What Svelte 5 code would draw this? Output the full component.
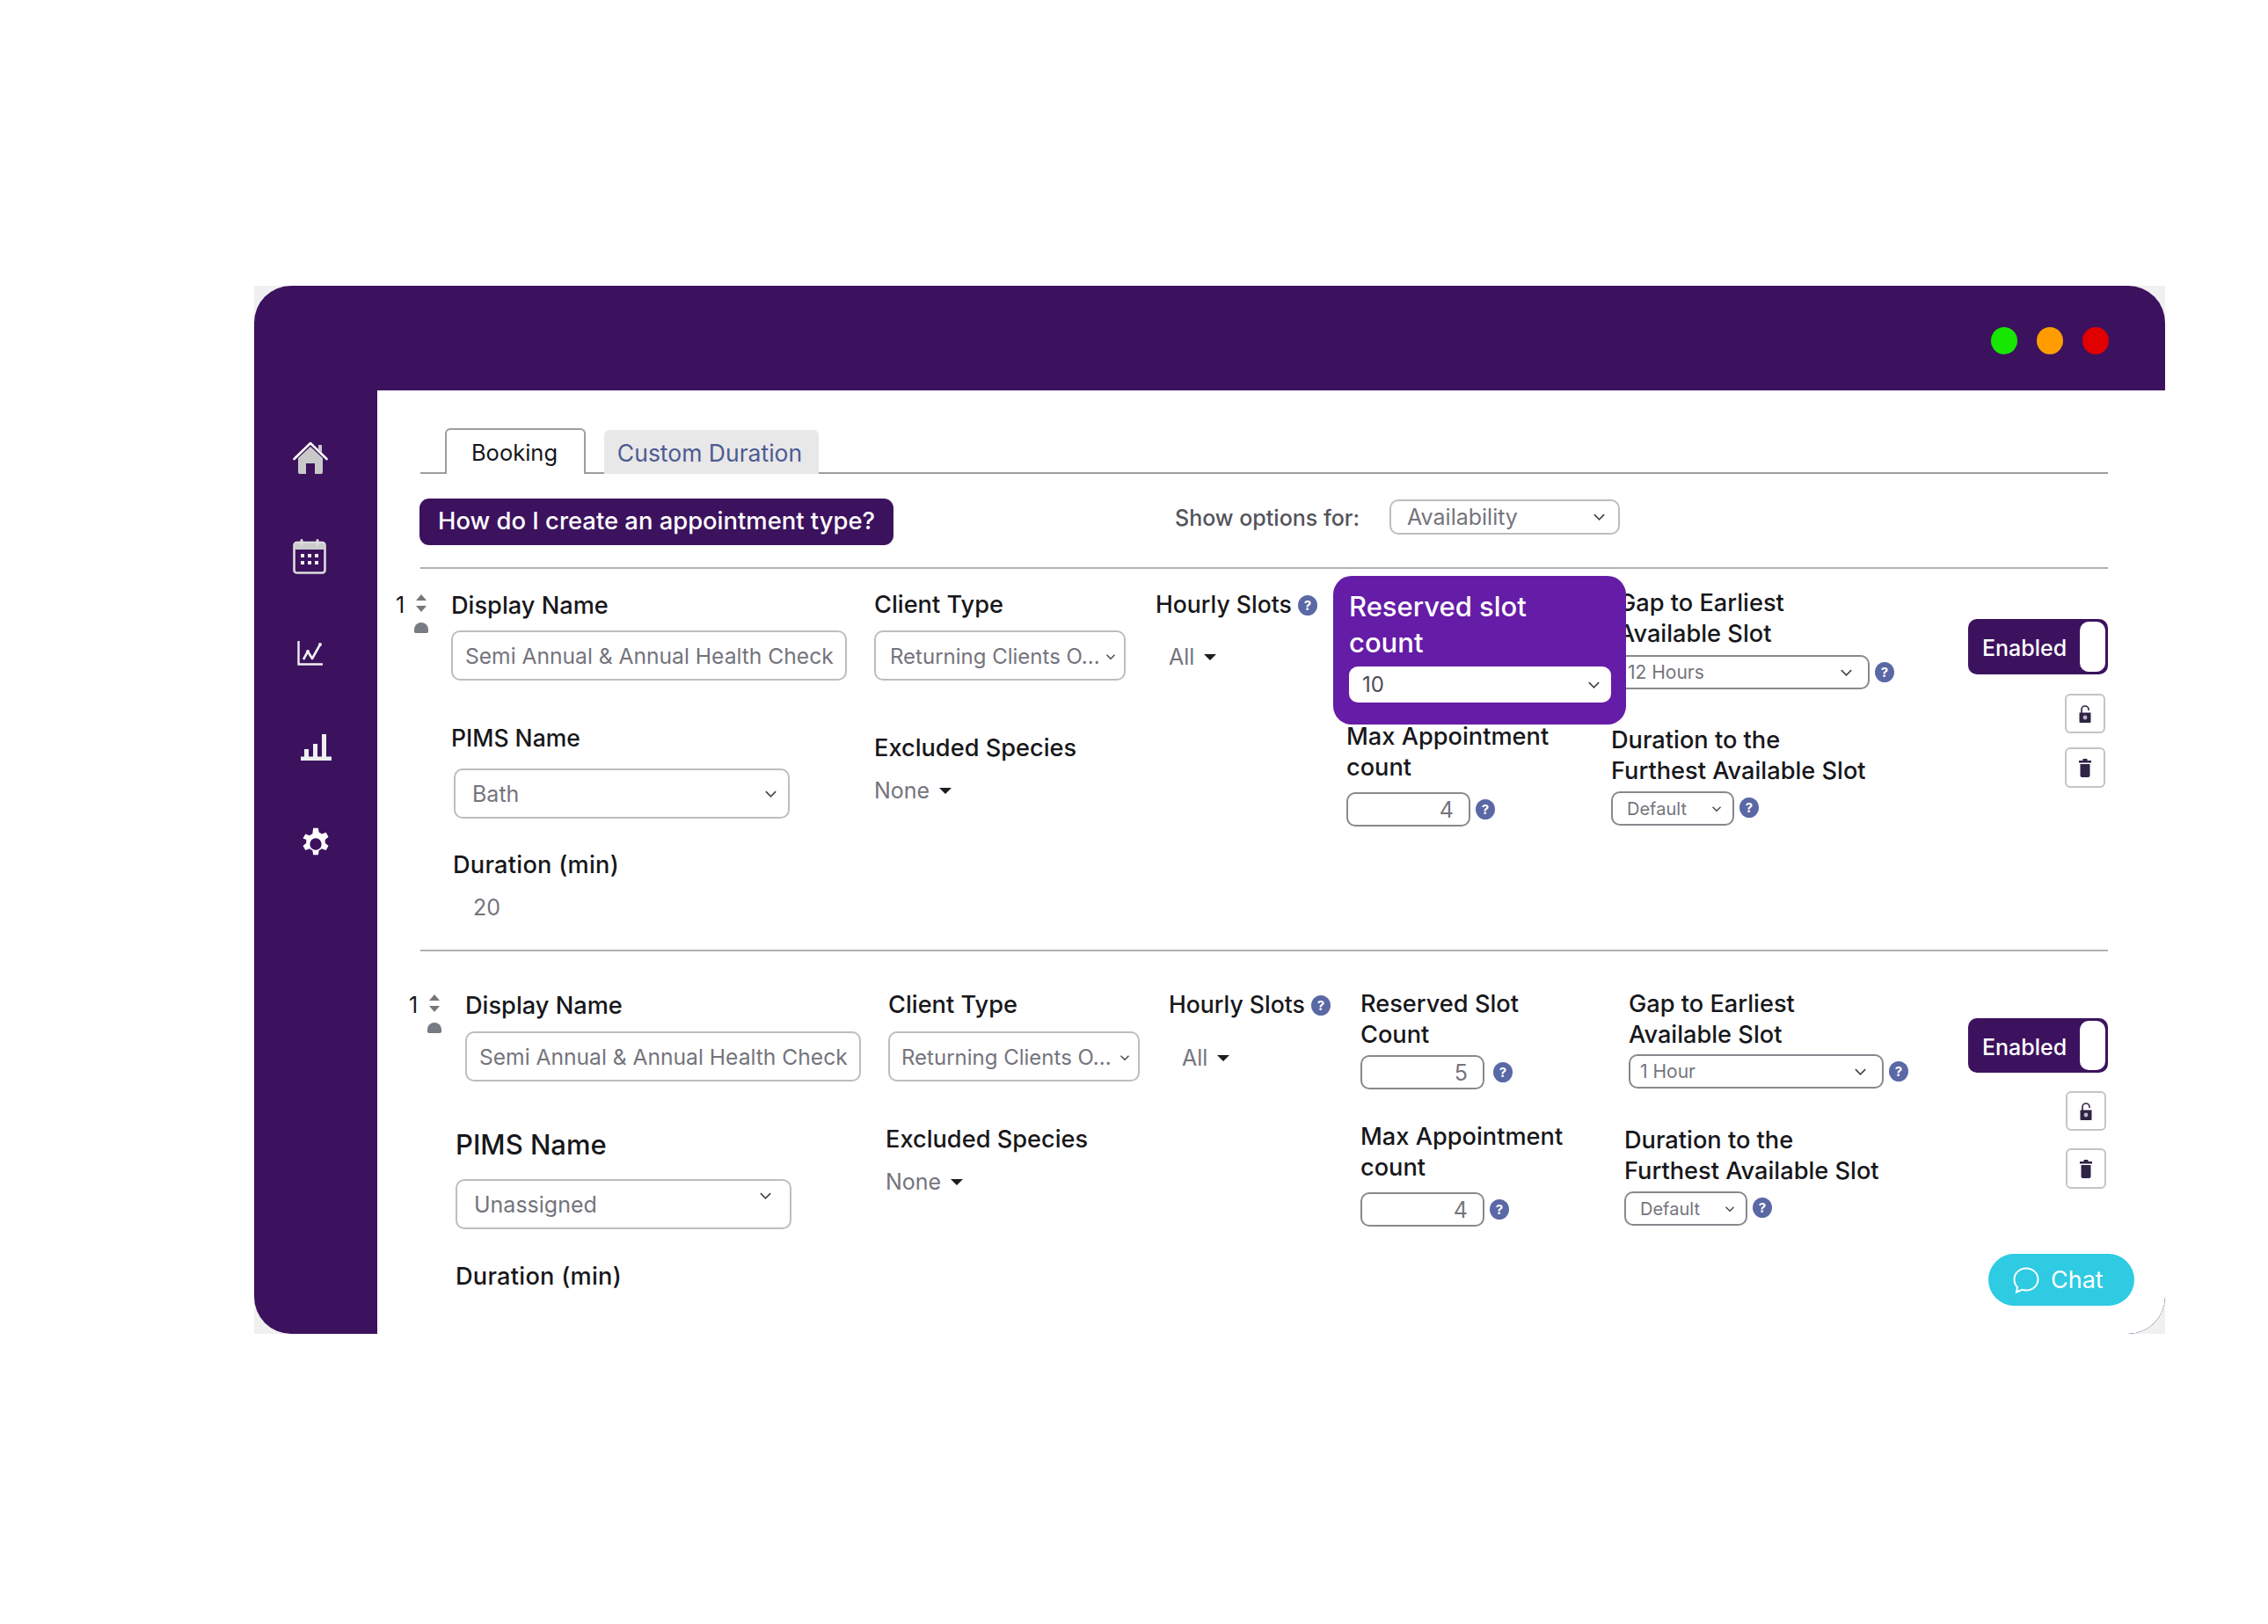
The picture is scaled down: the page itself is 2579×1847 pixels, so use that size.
<script lang="ts">
	const enabled = true;
</script>

{#snippet chevron()}
	<svg class="chevron" viewBox="0 0 16 10" aria-hidden="true"><path d="M2 2l6 6 6-6" /></svg>
{/snippet}

{#snippet help()}
	<span class="help">?</span>
{/snippet}

{#snippet caret()}
	<span class="caret"></span>
{/snippet}

{#snippet sorter()}
	<div class="sorter">
		<span class="up"></span>
		<span class="down"></span>
		<span class="blob"></span>
	</div>
{/snippet}

{#snippet actions()}
	<div class="toggle" class:on={enabled}>
		<span>Enabled</span>
		<i class="knob"></i>
	</div>
	<button class="icon-btn lock" aria-label="Lock">
		<svg viewBox="0 0 16 22" aria-hidden="true">
			<path class="shackle" d="M4 10V6a4 4 0 0 1 8 0v1" />
			<path d="M1.5 9.5h13v10.5a1 1 0 0 1-1 1h-11a1 1 0 0 1-1-1z" />
			<circle class="hole" cx="8" cy="15" r="2.4" />
		</svg>
	</button>
	<button class="icon-btn trash" aria-label="Delete">
		<svg viewBox="0 0 16 22" aria-hidden="true">
			<path d="M1 3h4.5V1h5v2H15v2.4H1zM2.5 7h11v13a2 2 0 0 1-2 2h-7a2 2 0 0 1-2-2z" />
		</svg>
	</button>
{/snippet}

<div class="page">
	<div class="frame">
		<div class="window">
			<header class="topbar">
				<span class="dot green"></span>
				<span class="dot orange"></span>
				<span class="dot red"></span>
			</header>

			<div class="body">
				<nav class="sidebar">
					<svg class="nav-home" viewBox="0 0 40 38" aria-label="Home">
						<path fill="#c9c9c9" d="M6 19L20 6l14 13v16a2 2 0 0 1-2 2h-7V25h-10v12H8a2 2 0 0 1-2-2z" />
						<path fill="none" stroke="#fff" stroke-width="2.6" stroke-linejoin="round" stroke-linecap="round" d="M1.5 20L20 2l18.500 18" />
						<path fill="#c9c9c9" d="M29 4h4v9l-4-4z" />
					</svg>
					<svg class="nav-cal" viewBox="0 0 38 40" aria-label="Calendar">
						<rect x="1.500" y="4" width="35" height="34.500" rx="3" fill="none" stroke="#ddd" stroke-width="2.600" />
						<path fill="#ccc" d="M2 5h34v7H2z" />
						<path stroke="#ddd" stroke-width="3" stroke-linecap="round" d="M10 1.500v5M28 1.500v5" />
						<g fill="#eee">
							<rect x="9" y="17" width="4" height="4" /><rect x="17" y="17" width="4" height="4" /><rect x="25" y="17" width="4" height="4" />
							<rect x="9" y="25" width="4" height="4" /><rect x="17" y="25" width="4" height="4" /><rect x="25" y="25" width="4" height="4" />
						</g>
					</svg>
					<svg class="nav-line" viewBox="0 0 29 28" aria-label="Trends">
						<path fill="none" stroke="#f0f0f0" stroke-width="2.400" d="M1.500 0v26.500H29" />
						<path fill="none" stroke="#f0f0f0" stroke-width="2.600" stroke-linejoin="round" d="M7 21l5-9 5 8 9-16" />
						<circle cx="26" cy="4" r="2" fill="#f0f0f0" />
						<circle cx="12" cy="12" r="2" fill="#f0f0f0" />
					</svg>
					<svg class="nav-bars" viewBox="0 0 35 30" aria-label="Reports">
						<path fill="#f0f0f0" d="M4 17h5v9H4zM14 11h5v15h-5zM24 0h5v26h-5zM0 25.500h35V30H0z" />
					</svg>
					<svg class="nav-gear" viewBox="0 0 24 24" aria-label="Settings">
						<path fill="#fff" fill-rule="evenodd" d="M13.700 1l.5 2.900a8.300 8.300 0 0 1 2 1.200l2.800-1 1.700 3-2.300 1.900a8.300 8.300 0 0 1 0 2.300l2.300 1.900-1.700 3-2.800-1a8.300 8.300 0 0 1-2 1.200l-.5 2.900h-3.400l-.5-2.900a8.300 8.300 0 0 1-2-1.200l-2.800 1-1.700-3 2.300-1.900a8.300 8.300 0 0 1 0-2.300L3.300 8.100l1.700-3 2.800 1a8.300 8.300 0 0 1 2-1.200L10.300 1zM12 8a4 4 0 1 0 0 8 4 4 0 0 0 0-8z" />
					</svg>
				</nav>

				<main class="content">
					<div class="tabs">
						<div class="tab active">Booking</div>
						<div class="tab">Custom Duration</div>
					</div>

					<div class="toolbar">
						<button class="help-btn">How do I create an appointment type?</button>
						<span class="show-label">Show options for:</span>
						<div class="select show-select"><span>Availability</span>{@render chevron()}</div>
					</div>

					<section class="record first">
						<div class="gutter"><span class="num">1</span>{@render sorter()}</div>

						<div class="col col-a">
							<div class="label">Display Name</div>
							<div class="field name"><span>Semi Annual &amp; Annual Health Check</span></div>
							<div class="label pims">PIMS Name</div>
							<div class="select big pims-select"><span>Bath</span>{@render chevron()}</div>
							<div class="label duration">Duration (min)</div>
							<div class="plain twenty">20</div>
						</div>

						<div class="col col-b">
							<div class="label">Client Type</div>
							<div class="select big client"><span>Returning Clients O...</span>{@render chevron()}</div>
							<div class="label excluded">Excluded Species</div>
							<div class="plain none">None {@render caret()}</div>
						</div>

						<div class="col col-c">
							<div class="label">Hourly Slots {@render help()}</div>
							<div class="plain all">All {@render caret()}</div>
						</div>

						<div class="col col-d">
							<div class="highlight">
								<div class="highlight-title">Reserved slot<br />count</div>
								<div class="select reserved"><span>10</span>{@render chevron()}</div>
							</div>
							<div class="label max">Max Appointment<br />count</div>
							<div class="with-help">
								<div class="number"><span>4</span></div>
								{@render help()}
							</div>
						</div>

						<div class="col col-e">
							<div class="label">Gap to Earliest<br />Available Slot</div>
							<div class="with-help gap-row">
								<div class="select small gap"><span>12 Hours</span>{@render chevron()}</div>
								{@render help()}
							</div>
							<div class="label further">Duration to the<br />Furthest Available Slot</div>
							<div class="with-help further-row">
								<div class="select small default"><span>Default</span>{@render chevron()}</div>
								{@render help()}
							</div>
						</div>

						<div class="col col-f">{@render actions()}</div>
					</section>

					<section class="record second">
						<div class="gutter"><span class="num">1</span>{@render sorter()}</div>

						<div class="col col-a">
							<div class="label">Display Name</div>
							<div class="field name"><span>Semi Annual &amp; Annual Health Check</span></div>
							<div class="label pims">PIMS Name</div>
							<div class="select big pims-select"><span>Unassigned</span>{@render chevron()}</div>
							<div class="label duration">Duration (min)</div>
						</div>

						<div class="col col-b">
							<div class="label">Client Type</div>
							<div class="select big client"><span>Returning Clients O...</span>{@render chevron()}</div>
							<div class="label excluded">Excluded Species</div>
							<div class="plain none">None {@render caret()}</div>
						</div>

						<div class="col col-c">
							<div class="label">Hourly Slots {@render help()}</div>
							<div class="plain all">All {@render caret()}</div>
						</div>

						<div class="col col-d">
							<div class="label">Reserved Slot<br />Count</div>
							<div class="with-help reserved-row">
								<div class="number"><span>5</span></div>
								{@render help()}
							</div>
							<div class="label max">Max Appointment<br />count</div>
							<div class="with-help">
								<div class="number"><span>4</span></div>
								{@render help()}
							</div>
						</div>

						<div class="col col-e">
							<div class="label">Gap to Earliest<br />Available Slot</div>
							<div class="with-help gap-row">
								<div class="select small gap"><span>1 Hour</span>{@render chevron()}</div>
								{@render help()}
							</div>
							<div class="label further">Duration to the<br />Furthest Available Slot</div>
							<div class="with-help further-row">
								<div class="select small default"><span>Default</span>{@render chevron()}</div>
								{@render help()}
							</div>
						</div>

						<div class="col col-f">{@render actions()}</div>
					</section>

					<button class="chat">
						<svg viewBox="0 0 32 32" aria-hidden="true">
							<path d="M16 2.500c7.500 0 13.500 5.500 13.500 12.500S23.500 27.500 16 27.500c-1.600 0-3.100-.2-4.500-.7L5 29.500l1-5.600C3.800 21.700 2.500 18.500 2.500 15 2.500 8 8.500 2.500 16 2.500z" />
						</svg>
						Chat
					</button>
				</main>
			</div>
		</div>
	</div>
</div>

<style>
	:global(body) {
		background: #fff;
		font-family: Inter, "Liberation Sans", sans-serif;
	}

	.page {
		width: 2579px;
		height: 1847px;
		padding: 325px 0 0 289px;
		box-sizing: border-box;
	}

	.frame {
		width: 2173px;
		height: 1192px;
		background: #f0f0f0;
	}

	.window {
		height: 100%;
		background: #3c125e;
		border-radius: 42px;
		overflow: hidden;
		display: flex;
		flex-direction: column;
	}

	.topbar {
		height: 119px;
		flex: none;
		display: flex;
		align-items: center;
		justify-content: flex-end;
		gap: 22px;
		padding: 5px 64px 0 0;
		box-sizing: border-box;
	}

	.dot {
		width: 30px;
		height: 31px;
		border-radius: 50%;
	}
	.green { background: #17e600; }
	.orange { background: #ff9d00; }
	.red { background: #e00000; }

	.body {
		flex: 1;
		display: flex;
		min-height: 0;
	}

	.sidebar {
		width: 140px;
		flex: none;
		display: flex;
		flex-direction: column;
		align-items: flex-start;
		padding-top: 58px;
		box-sizing: border-box;
	}
	.sidebar svg { display: block; }
	.nav-home { width: 40px; height: 38px; margin: 0 0 73px 44px; }
	.nav-cal { width: 38px; height: 40px; margin: 0 0 76px 44px; }
	.nav-line { width: 29px; height: 28px; margin: 0 0 78px 49px; }
	.nav-bars { width: 35px; height: 30px; margin: 0 0 75px 53px; }
	.nav-gear { width: 40px; height: 40px; margin-left: 50px; }

	.content {
		position: relative;
		flex: 1;
		min-width: 0;
		background: #fff;
		border-bottom-right-radius: 42px;
		padding: 43px 65px 0 49px;
		box-sizing: border-box;
		overflow: hidden;
	}

	.tabs {
		display: flex;
		gap: 21px;
		height: 52px;
		padding-left: 28px;
		border-bottom: 2px solid #9c9ca2;
		box-sizing: border-box;
	}

	.tab {
		width: 244px;
		height: 50px;
		margin-top: 2px;
		padding-right: 4px;
		box-sizing: border-box;
		background: #e8e8e8;
		border-radius: 6px 6px 0 0;
		color: #4d5b92;
		font-size: 26.500px;
		line-height: 52px;
		text-align: center;
	}

	.tab.active {
		width: 160px;
		height: 52px;
		margin-top: 0;
		padding-right: 2px;
		background: #fff;
		border: 2px solid #9c9ca2;
		border-bottom: none;
		color: #16161a;
		font-size: 25.500px;
		line-height: 52px;
	}

	.toolbar {
		display: flex;
		align-items: center;
		height: 53px;
		margin-top: 28px;
		padding-bottom: 25px;
		box-sizing: content-box;
		border-bottom: 2px solid #b0b0b6;
	}

	.help-btn {
		width: 539px;
		height: 53px;
		margin-left: -1px;
		padding: 0 0 3px;
		border: none;
		border-radius: 11px;
		background: #3c125e;
		color: #fff;
		font-family: inherit;
		font-size: 27.400px;
		font-weight: 500;
	}

	.show-label {
		margin: -9px 0 0 320px;
		color: #54545c;
		font-size: 25px;
		font-weight: 500;
	}

	.select, .field, .number {
		display: flex;
		align-items: center;
		box-sizing: border-box;
		background: #fff;
		border: 2px solid #bdbdc2;
		border-radius: 10px;
		color: #74747c;
		white-space: nowrap;
	}

	.select { justify-content: space-between; }

	.show-select {
		width: 262px;
		height: 40px;
		margin: -12px 0 0 34px;
		padding: 0 14px 0 18px;
		font-size: 25px;
	}

	.record {
		display: flex;
		height: 433px;
		border-bottom: 2px solid #b0b0b6;
		box-sizing: content-box;
	}

	.record.second {
		height: 440px;
		border-bottom: none;
	}

	.gutter {
		display: flex;
		gap: 11px;
		width: 63px;
		margin-left: -28px;
		flex: none;
		box-sizing: border-box;
		padding-top: 26px;
	}

	.second .gutter {
		width: 79px;
		padding: 46px 0 0 15px;
	}

	.num {
		font-size: 25px;
		line-height: 30px;
		color: #16161a;
	}

	.sorter {
		display: flex;
		flex-direction: column;
		align-items: center;
		gap: 6px;
		width: 16px;
		padding-top: 3px;
	}

	.up, .down {
		width: 0;
		height: 0;
		border-left: 6px solid transparent;
		border-right: 6px solid transparent;
	}
	.up { border-bottom: 7px solid #76767c; }
	.down { border-top: 7px solid #76767c; }

	.blob {
		width: 16px;
		height: 12px;
		margin-top: 6px;
		background: #777b84;
		border-radius: 9px 9px 2px 2px;
	}

	.col {
		display: flex;
		flex-direction: column;
		align-items: flex-start;
		flex: none;
		box-sizing: border-box;
	}

	.label {
		font-size: 27.200px;
		font-weight: 500;
		line-height: 35px;
		color: #17171b;
		white-space: nowrap;
	}

	.plain {
		color: #74747c;
		font-size: 25px;
		line-height: 35px;
	}

	.big {
		height: 57px;
		font-size: 25px;
	}

	.small {
		height: 39px;
		font-size: 21px;
		border-color: #88888e;
	}

	.chevron {
		width: 15px;
		height: 10px;
		flex: none;
		fill: none;
		stroke: #44444a;
		stroke-width: 1.800;
	}

	.caret {
		display: inline-block;
		width: 0;
		height: 0;
		margin: 0 0 3px 4px;
		border-left: 7px solid transparent;
		border-right: 7px solid transparent;
		border-top: 7px solid #1c1c22;
		vertical-align: middle;
	}

	.help {
		display: inline-flex;
		align-items: center;
		justify-content: center;
		width: 22px;
		height: 23px;
		flex: none;
		border-radius: 50%;
		background: #5a68a5;
		color: #fff;
		font-size: 15px;
		font-weight: 700;
		line-height: 1;
		vertical-align: 3px;
	}

	.with-help {
		display: flex;
		align-items: center;
		gap: 6px;
	}

	.number {
		justify-content: flex-end;
		width: 141px;
		height: 39px;
		padding-right: 17px;
		font-size: 25px;
		border-color: #88888e;
	}

	/* columns of the first record */
	.col-a { width: 481px; padding-top: 24px; }
	.name {
		width: 450px;
		height: 57px;
		margin-top: 11px;
		padding-left: 14px;
		font-size: 24.600px;
	}
	.pims { margin-top: 48px; font-size: 26.500px; }
	.pims-select {
		width: 382px;
		margin: 17px 0 0 3px;
		padding: 0 12px 0 19px;
	}
	.duration { margin: 35px 0 0 2px; letter-spacing: .25px; }
	.twenty { margin: 14px 0 0 25px; }

	.col-b { width: 321px; padding-top: 23px; }
	.client {
		width: 286px;
		margin-top: 12px;
		padding: 2px 9px 0 16px;
		font-size: 24px;
	}
	.client .chevron { width: 12px; }
	.excluded { margin-top: 59px; }
	.none { margin-top: 14px; }

	.col-c { width: 202px; margin-left: -1px; padding-top: 23px; }
	.col-c .label { font-size: 26.600px; }
	.all { margin: 25px 0 0 15px; }

	.col-d { width: 333px; padding-top: 8px; }
	.highlight {
		position: relative;
		z-index: 1;
		width: 333px;
		height: 169px;
		padding: 14px 17px 0 18px;
		box-sizing: border-box;
		background: #651ca6;
		border-radius: 21px;
	}
	.highlight-title {
		color: #fff;
		font-size: 31px;
		font-weight: 500;
		line-height: 41px;
	}
	.reserved {
		height: 41px;
		margin-top: 7px;
		padding: 0 12px 0 15px;
		border: none;
		font-size: 24px;
		color: #4c4c54;
	}
	.max { margin: -4px 0 11px 15px; }
	.col-d .with-help { margin-left: 15px; }

	.col-e { width: 398px; margin-left: -9px; padding-top: 21px; }
	.gap-row { margin-top: 7px; }
	.gap {
		width: 286px;
		padding: 0 17px 0 9px;
	}
	.further { margin: 40px 0 0 -8px; }
	.further-row { margin: 6px 0 0 -8px; }
	.further-row .help { margin-top: -3px; }
	.default {
		width: 140px;
		padding: 0 12px 0 16px;
		font-size: 20px;
	}
	.default .chevron { width: 12px; }

	.col-f {
		width: 159px;
		align-items: flex-end;
		padding-top: 57px;
	}

	.toggle {
		display: flex;
		align-items: center;
		justify-content: space-between;
		width: 159px;
		height: 63px;
		padding: 3px 3px 3px 16px;
		box-sizing: border-box;
		background: #3c125e;
		border-radius: 10px;
		color: #fff;
		font-size: 25px;
		font-weight: 500;
	}

	.toggle span { padding-top: 3px; }

	.knob {
		width: 29px;
		height: 100%;
		background: #fff;
		border-radius: 10px;
	}

	.icon-btn {
		display: flex;
		align-items: center;
		justify-content: center;
		width: 46px;
		height: 45px;
		padding: 0;
		margin-right: 3px;
		background: #fff;
		border: 2px solid #c4c4c8;
		border-radius: 6px;
	}
	.icon-btn svg { width: 16px; height: 22px; fill: #2f2445; }
	.lock { margin-top: 22px; }
	.trash { margin-top: 16px; height: 46px; }
	.shackle { fill: none; stroke: #2f2445; stroke-width: 1.600; }
	.hole { fill: #b9b6c4; }

	/* the second record sits a little further right */
	.second .pims {
		margin: 52px 0 0 -11px;
		font-size: 31px;
		line-height: 40px;
	}
	.second .col-a { width: 481px; padding-top: 44px; }
	.second .name { margin-top: 12px; }
	.second .pims-select {
		margin: 19px 0 0 -11px;
		padding-bottom: 0;
	}
	.second .pims-select .chevron { margin: -20px 8px 0 0; }
	.second .duration { margin: 36px 0 0 -11px; }

	.second .col-b { width: 320px; padding-top: 43px; }
	.second .client { margin-top: 13px; padding-left: 13px; }
	.second .excluded { margin: 48px 0 0 -3px; }
	.second .none { margin: 14px 0 0 -3px; }

	.second .col-c { width: 218px; padding-top: 43px; }
	.second .all { margin-top: 26px; }

	.second .col-d { width: 305px; padding-top: 42px; }
	.second .reserved-row { margin: 6px 0 0; }
	.second .col-d .with-help { margin-left: 0; }
	.second .reserved-row { gap: 10px; }
	.second .max { margin: 36px 0 11px; }

	.second .col-e { width: 386px; margin-left: 0; padding-top: 42px; }
	.second .gap-row { margin-top: 5px; }
	.second .gap { width: 290px; padding-left: 11px; }
	.second .further { margin: 41px 0 0 -5px; }
	.second .further-row { margin: 6px 0 0 -5px; }

	.second .col-f { padding-top: 76px; }
	.second .toggle { height: 62px; }
	.second .lock { margin-top: 21px; margin-right: 2px; }
	.second .trash { margin-top: 20px; margin-right: 2px; }

	.chat {
		position: absolute;
		right: 35px;
		bottom: 32px;
		display: flex;
		align-items: center;
		gap: 12px;
		width: 166px;
		height: 59px;
		padding: 0 0 0 27px;
		border: none;
		border-radius: 30px;
		background: #2ecbe3;
		color: #fff;
		font-family: inherit;
		font-size: 27px;
	}
	.chat svg {
		width: 32px;
		height: 32px;
		fill: none;
		stroke: #fff;
		stroke-width: 2;
	}
</style>
